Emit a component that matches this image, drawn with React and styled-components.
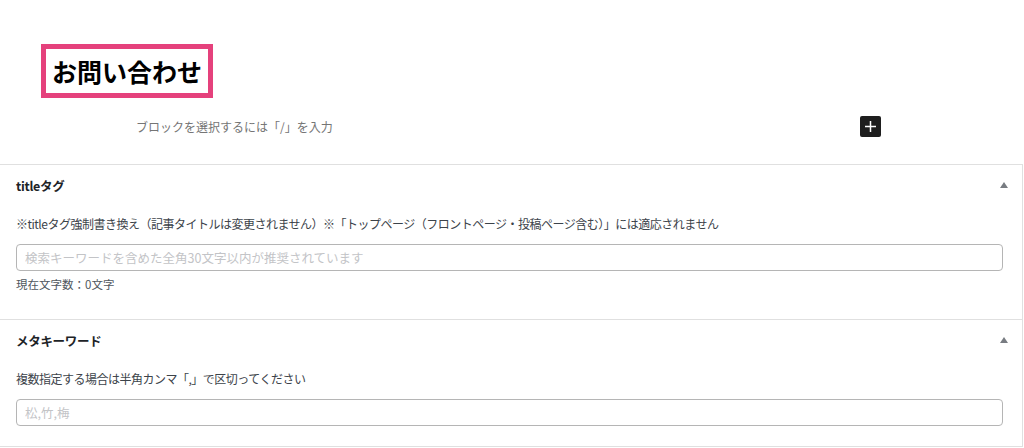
import React from 'react';
import styled, { createGlobalStyle } from 'styled-components';

const GlobalStyle = createGlobalStyle`
  body {
    margin: 0;
    background: #fff;
    font-family: "Noto Sans CJK JP", "Noto Sans", sans-serif;
    color: #1e1e1e;
  }
`;

const Canvas = styled.div`
  width: 1024px;
  height: 448px;
  overflow: hidden;
  background: #fff;
`;

const EditorArea = styled.div`
  box-sizing: border-box;
  height: 164px;
  padding: 44px 0 0 41px;
`;

const TitleBox = styled.h1`
  display: inline-block;
  margin: 0;
  padding: 0 6px;
  border: 5px solid #e5417c;
  font-size: 25px;
  font-weight: 700;
  line-height: 44px;
  color: #000;
`;

const InserterRow = styled.div`
  display: flex;
  align-items: center;
  justify-content: space-between;
  width: 745px;
  height: 21px;
  margin: 18px 0 0 95px;
`;

const Placeholder = styled.span`
  font-size: 12px;
  color: #757575;
`;

const PlusButton = styled.button`
  display: flex;
  align-items: center;
  justify-content: center;
  width: 21px;
  height: 21px;
  padding: 0;
  border: none;
  border-radius: 2px;
  background: #1e1e1e;
`;

const Panel = styled.div`
  width: 1023px;
  box-sizing: border-box;
  border-top: 1px solid #e0e0e0;
  border-right: 1px solid #e0e0e0;
  border-bottom: 1px solid #e0e0e0;
`;

const Section = styled.section`
  padding: 0 19px ${p => (p.$last ? 20 : 0)}px 16px;
  & + & {
    border-top: 1px solid #e0e0e0;
  }
`;

const SectionHeader = styled.div`
  display: flex;
  align-items: center;
  justify-content: space-between;
  height: 40px;
  font-size: 12.5px;
  letter-spacing: -0.3px;
  font-weight: 700;
  color: #1d2327;
`;

const Toggle = styled.span`
  width: 0;
  height: 0;
  margin-right: -5px;
  border-left: 4px solid transparent;
  border-right: 4px solid transparent;
  border-bottom: 6px solid #787c82;
`;

const Description = styled.p`
  margin: 10px 0 0;
  font-size: 12px;
  letter-spacing: -0.5px;
  line-height: 18px;
  color: #3c434a;
`;

const TextInput = styled.input`
  display: block;
  box-sizing: border-box;
  width: 987px;
  height: 27px;
  margin-top: 11px;
  padding: 0 8px;
  border: 1px solid #b5b5b5;
  border-radius: 4px;
  font-family: inherit;
  font-size: 12.5px;
  &::placeholder {
    color: #c3c4c7;
  }
`;

const Counter = styled.div`
  margin: 5px 0 7px;
  font-size: 11.5px;
  line-height: 16px;
  color: #50575e;
  padding-bottom: 20px;
`;

export default function App() {
  return (
    <Canvas>
      <GlobalStyle />
      <EditorArea>
        <TitleBox>お問い合わせ</TitleBox>
        <InserterRow>
          <Placeholder>ブロックを選択するには「/」を入力</Placeholder>
          <PlusButton aria-label="ブロックを追加">
            <svg width="13" height="13" viewBox="0 0 13 13">
              <path d="M6.5 1v11M1 6.5h11" stroke="#fff" strokeWidth="1.5" />
            </svg>
          </PlusButton>
        </InserterRow>
      </EditorArea>
      <Panel>
        <Section>
          <SectionHeader>
            <span>titleタグ</span>
            <Toggle />
          </SectionHeader>
          <Description>
            ※titleタグ強制書き換え（記事タイトルは変更されません）※「トップページ（フロントページ・投稿ページ含む）」には適応されません
          </Description>
          <TextInput placeholder="検索キーワードを含めた全角30文字以内が推奨されています" />
          <Counter>現在文字数：0文字</Counter>
        </Section>
        <Section $last>
          <SectionHeader>
            <span>メタキーワード</span>
            <Toggle />
          </SectionHeader>
          <Description>複数指定する場合は半角カンマ「,」で区切ってください</Description>
          <TextInput placeholder="松,竹,梅" />
        </Section>
      </Panel>
    </Canvas>
  );
}
